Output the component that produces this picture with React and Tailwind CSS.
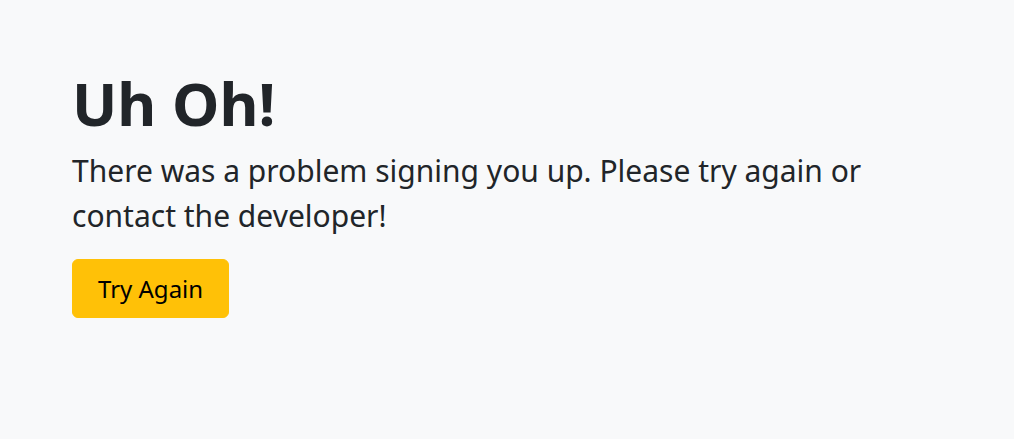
export default function App() {
  return (
    <div
      className="min-h-screen w-full bg-[#f8f9fa] text-[#212529]"
      style={{ fontFamily: '"Noto Sans", "Open Sans", sans-serif' }}
    >
      <div className="px-[72px] pt-[67px]">
        <h1 className="text-[60px] font-bold leading-[1.2]">Uh Oh!</h1>
        <p className="mt-[9px] max-w-[880px] text-[30px] leading-[45px]">
          There was a problem signing you up. Please try again or contact the developer!
        </p>
        <button className="mt-[21px] rounded-[6px] border border-[#ffc107] bg-[#ffc107] px-[25px] py-[10px] text-[24px] leading-[37px] text-black">
          Try Again
        </button>
      </div>
    </div>
  );
}
